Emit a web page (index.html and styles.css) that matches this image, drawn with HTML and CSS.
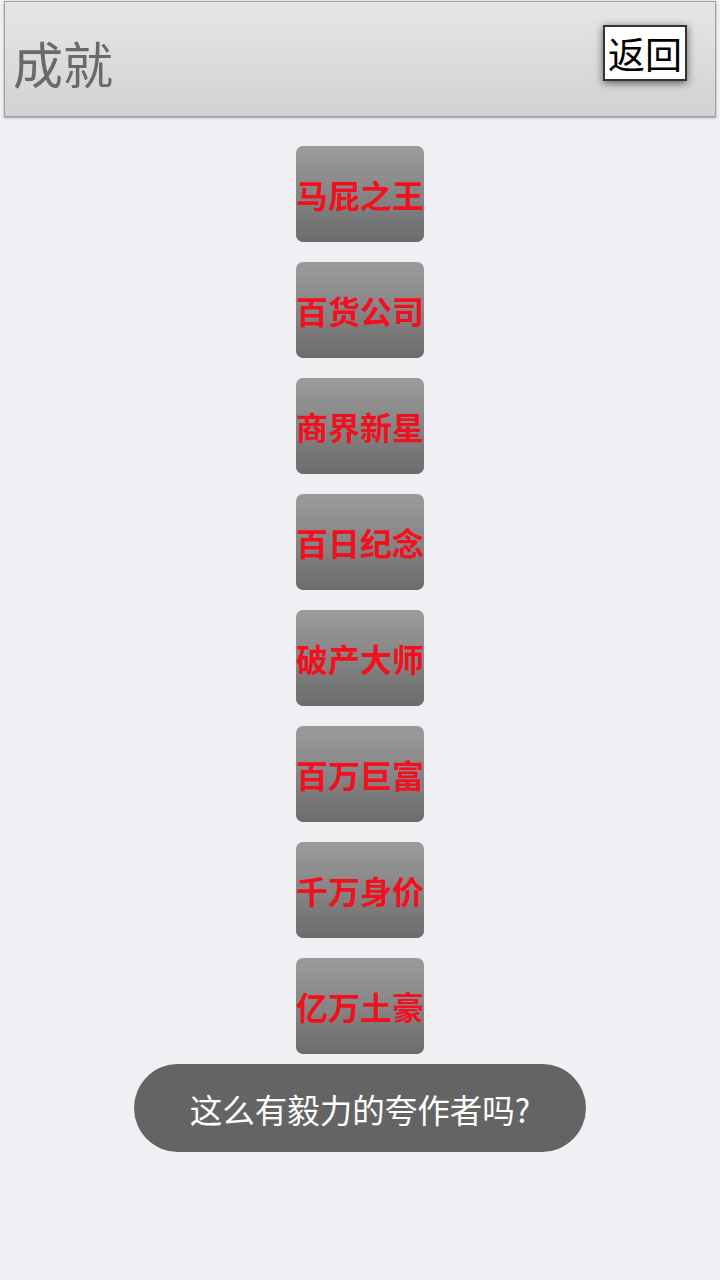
FILE: index.html
```html
<!DOCTYPE html>
<html lang="zh-CN">
<head>
    <meta charset="UTF-8">
    <title>成就</title>
    <link rel="stylesheet" href="styles.css">
</head>
<body>
<div class="header">
    <div class="title">成就</div>
    <button class="back">返回</button>
</div>

<div class="list">
    <div class="badge">马屁之王</div>
    <div class="badge">百货公司</div>
    <div class="badge">商界新星</div>
    <div class="badge">百日纪念</div>
    <div class="badge">破产大师</div>
    <div class="badge">百万巨富</div>
    <div class="badge">千万身价</div>
    <div class="badge">亿万土豪</div>
</div>

<div class="toast">这么有毅力的夸作者吗?</div>
</body>
</html>
```

FILE: styles.css
```css
body {
    margin: 0;
    width: 720px;
    height: 1280px;
    background-color: #efeff4;
    font-family: "Noto Sans CJK SC", "Noto Sans", sans-serif;
    position: relative;
    overflow: hidden;
}

.header {
    margin: 1px 4px 0 4px;
    height: 114px;
    border: 1px solid #a0a0a0;
    background: linear-gradient(180deg, #e6e6e6, #d2d2d2);
    box-shadow: 0 1px 2px rgba(0, 0, 0, 0.35);
    display: flex;
    align-items: center;
    justify-content: space-between;
    padding: 0 28px 0 8px;
}

.title {
    font-size: 50px;
    color: #6a6a6a;
    line-height: 1;
    margin-top: 6px;
}

.back {
    width: 84px;
    height: 56px;
    margin-top: -12px;
    padding: 0;
    background-color: #fff;
    border: 2px solid #333;
    font-family: "Noto Sans CJK SC", sans-serif;
    font-size: 37px;
    line-height: 1;
    color: #000;
    box-shadow: 0 2px 8px rgba(0, 0, 0, 0.6);
}

.list {
    display: flex;
    flex-direction: column;
    align-items: center;
    gap: 20px;
    margin-top: 29px;
}

.badge {
    width: 128px;
    height: 96px;
    border-radius: 7px;
    background: linear-gradient(180deg, #9b9b9b, #838383 55%, #6a6b6a);
    color: #f2101e;
    font-weight: bold;
    font-size: 32px;
    display: flex;
    align-items: center;
    justify-content: center;
    white-space: nowrap;
    overflow: hidden;
}

.toast {
    position: absolute;
    left: 134px;
    top: 1064px;
    width: 452px;
    height: 88px;
    border-radius: 44px;
    background-color: #636463;
    color: #fff;
    font-size: 32.5px;
    display: flex;
    align-items: center;
    justify-content: center;
}
```
